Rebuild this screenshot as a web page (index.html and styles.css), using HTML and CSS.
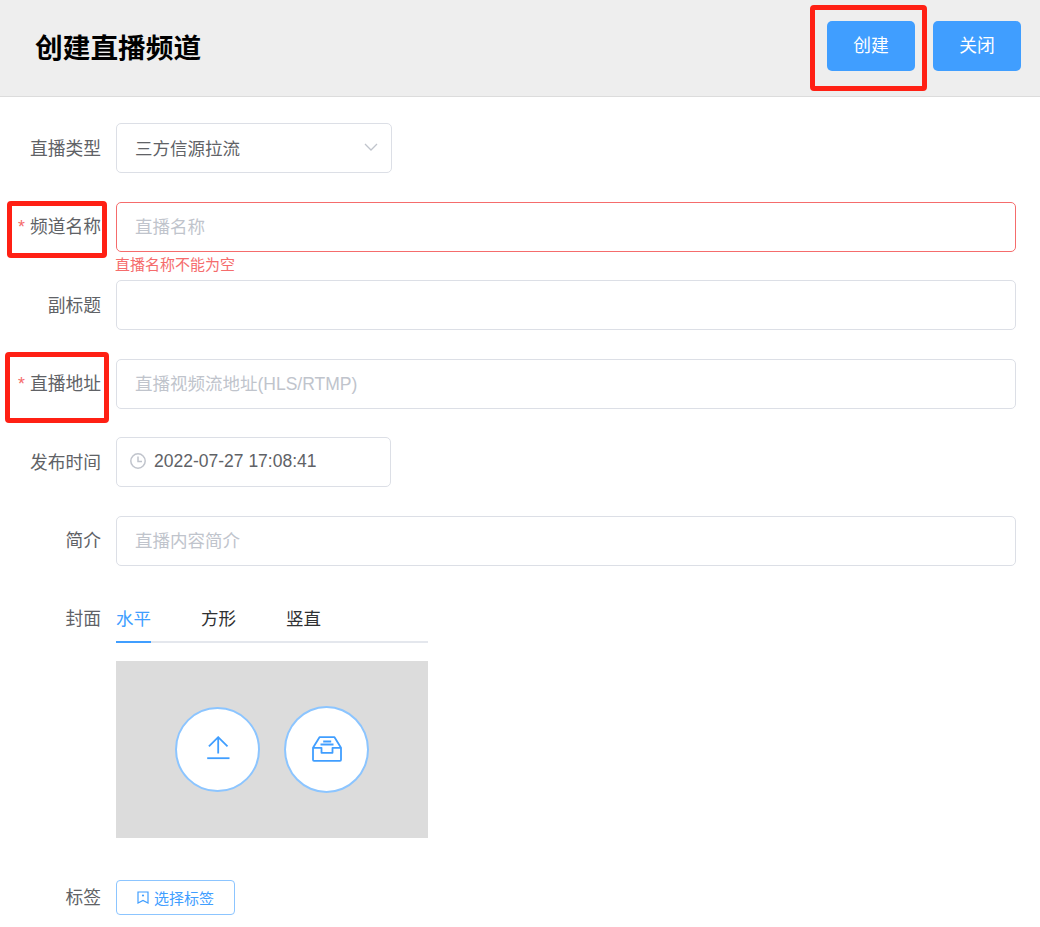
FILE: index.html
```html
<!DOCTYPE html>
<html lang="zh-CN">
<head>
<meta charset="utf-8">
<title>创建直播频道</title>
<link rel="stylesheet" href="styles.css">
</head>
<body>
<header class="header">
  <h1 class="title">创建直播频道</h1>
  <div class="actions">
    <button class="btn">创建</button>
    <button class="btn">关闭</button>
  </div>
</header>
<main class="form">
  <div class="row">
    <label class="label">直播类型</label>
    <div class="field field-select">
      <span class="value">三方信源拉流</span>
      <svg class="chevron" width="14" height="8" viewBox="0 0 14 8"><path d="M1 1l6 6 6-6" fill="none" stroke="#c0c4cc" stroke-width="1.300"/></svg>
    </div>
  </div>
  <div class="row">
    <label class="label"><span class="star">*</span>频道名称</label>
    <div class="field field-error"><span class="placeholder">直播名称</span></div>
    <div class="error">直播名称不能为空</div>
  </div>
  <div class="row">
    <label class="label">副标题</label>
    <div class="field"></div>
  </div>
  <div class="row">
    <label class="label"><span class="star">*</span>直播地址</label>
    <div class="field"><span class="placeholder">直播视频流地址(HLS/RTMP)</span></div>
  </div>
  <div class="row">
    <label class="label">发布时间</label>
    <div class="field field-date">
      <svg class="clock" width="16" height="16" viewBox="0 0 16 16"><circle cx="8" cy="8" r="7.200" fill="none" stroke="#c0c4cc" stroke-width="1.500"/><path d="M8 3.500V8.500h4" fill="none" stroke="#c0c4cc" stroke-width="1.500"/></svg>
      <span class="value">2022-07-27 17:08:41</span>
    </div>
  </div>
  <div class="row">
    <label class="label">简介</label>
    <div class="field"><span class="placeholder">直播内容简介</span></div>
  </div>
  <div class="row-cover">
    <label class="label label-cover">封面</label>
    <div class="cover">
      <div class="tabs">
        <span class="tab tab-active">水平</span>
        <span class="tab">方形</span>
        <span class="tab">竖直</span>
      </div>
      <div class="preview">
        <div class="circle circle-a">
          <svg width="24" height="24" viewBox="0 0 24 24" fill="none" stroke="#409eff" stroke-width="1.800"><path d="M12.200 17.500V1.500M2.900 10.400l9.300-9.200 9.300 9.200"/><path d="M1.200 22.200h22.300"/></svg>
        </div>
        <div class="circle circle-b">
          <svg width="30" height="26" viewBox="0 0 30 26" fill="none" stroke="#409eff" stroke-width="1.800" stroke-linejoin="round"><path d="M1 11.800L7.500 1.200h15L29 11.800v12a1 1 0 0 1-1 1H2a1 1 0 0 1-1-1z"/><path d="M1 11.800h8.500v5h11v-5H29"/><path d="M11.200 5.500h8M8.500 8.500h13"/></svg>
        </div>
      </div>
    </div>
  </div>
  <div class="row-tags">
    <label class="label">标签</label>
    <button class="tag-btn">
      <svg width="12" height="13" viewBox="0 0 12 13" fill="none" stroke="#409eff" stroke-width="1.200"><path d="M1 1h10v11L6 9.500 1 12z"/><circle cx="6" cy="4.500" r="1.100" fill="#409eff" stroke="none"/></svg>
      选择标签
    </button>
  </div>
</main>
<div class="mark mark-create"></div>
<div class="mark mark-name"></div>
<div class="mark mark-addr"></div>
</body>
</html>
```
FILE: styles.css
```css
html, body {
  margin: 0;
  padding: 0;
  height: 927px;
  overflow: hidden;
  background: #fff;
}
body {
  position: relative;
  font-family: "Liberation Sans", "Noto Sans CJK SC", sans-serif;
  font-size: 17.5px;
  color: #606266;
}
.header {
  box-sizing: border-box;
  height: 97px;
  background: #eee;
  border-bottom: 1px solid #dcdcdc;
  display: flex;
  align-items: center;
  justify-content: space-between;
  padding: 0 19px 5px 35px;
}
.title {
  margin: 0;
  font-size: 27.7px;
  font-weight: 700;
  color: #000;
}
.actions {
  display: flex;
  gap: 18px;
  margin-top: 1px;
}
.btn {
  width: 88px;
  height: 50px;
  border: 0;
  border-radius: 5px;
  background: #409eff;
  color: #fff;
  font: inherit;
  font-size: 17.75px;
  padding: 0 0 5px;
}
.form {
  padding: 26px 24px 0 0;
}
.row {
  position: relative;
  display: flex;
  align-items: center;
  gap: 15px;
  height: 50px;
  margin-bottom: 28.5px;
}
.label {
  flex: none;
  width: 101px;
  font-size: 17.75px;
  text-align: right;
  white-space: nowrap;
  padding-bottom: 3px;
  box-sizing: border-box;
}
.star {
  color: #f56c6c;
  margin-right: 5px;
}
.field {
  box-sizing: border-box;
  flex: 1;
  height: 50px;
  border: 1px solid #dcdfe6;
  border-radius: 5px;
  padding: 0 18px 2px;
  display: flex;
  align-items: center;
}
.field-select {
  flex: none;
  width: 276px;
  justify-content: space-between;
  padding-right: 13px;
}
.field-date {
  flex: none;
  width: 275px;
  padding-left: 13px;
  gap: 8px;
}
.field-error {
  border-color: #f56c6c;
}
.placeholder {
  color: #c0c4cc;
}
.error {
  position: absolute;
  left: 115px;
  top: 53px;
  font-size: 15px;
  line-height: 20px;
  color: #f56c6c;
}
.row-cover {
  display: flex;
  gap: 15px;
}
.label-cover {
  padding-top: 10px;
  line-height: 30px;
}
.cover {
  width: 312px;
}
.tabs {
  display: flex;
  gap: 50px;
  height: 47px;
  border-bottom: 2px solid #e4e7ed;
}
.tab {
  height: 49px;
  line-height: 50px;
  color: #303133;
  box-sizing: border-box;
}
.tab-active {
  color: #409eff;
  border-bottom: 2px solid #409eff;
}
.preview {
  height: 177px;
  margin-top: 18px;
  background: #dcdcdc;
  display: flex;
  justify-content: center;
  align-items: center;
  gap: 24px;
}
.circle {
  box-sizing: border-box;
  width: 85px;
  height: 85px;
  border: 2px solid #8cc5ff;
  border-radius: 50%;
  background: #fff;
  display: flex;
  align-items: center;
  justify-content: center;
}
.circle-a {
  padding-bottom: 4px;
}
.circle-b {
  height: 87px;
  padding-bottom: 1px;
}
.row-tags {
  display: flex;
  align-items: center;
  gap: 15px;
  margin-top: 42px;
}
.tag-btn {
  box-sizing: border-box;
  width: 119px;
  height: 35px;
  border: 1px solid #8cc5ff;
  border-radius: 4px;
  background: #fff;
  color: #409eff;
  font: inherit;
  font-size: 15px;
  display: flex;
  align-items: center;
  justify-content: center;
  gap: 5px;
  padding: 0 0 1px;
}
.mark {
  position: absolute;
  box-sizing: border-box;
  border: 5px solid #ff2014;
  border-radius: 4px;
}
.mark-create {
  left: 810px;
  top: 5px;
  width: 117px;
  height: 86px;
}
.mark-name {
  left: 7px;
  top: 201px;
  width: 100px;
  height: 57px;
}
.mark-addr {
  left: 5px;
  top: 352px;
  width: 104px;
  height: 71px;
}
```
